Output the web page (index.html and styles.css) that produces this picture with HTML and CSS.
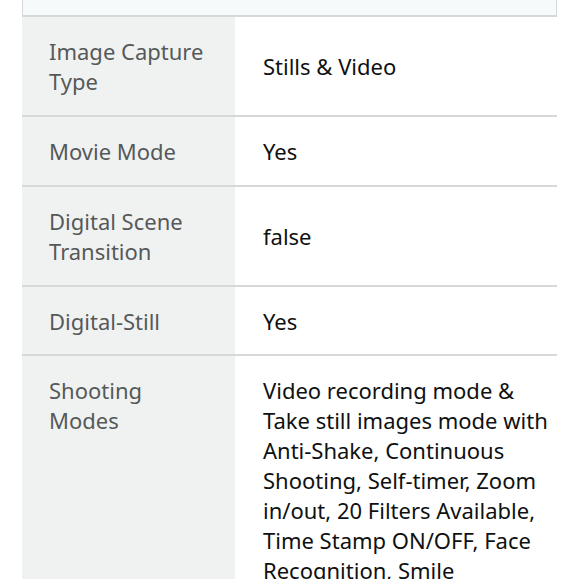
FILE: index.html
```html
<!DOCTYPE html>
<html>
<head>
<meta charset="utf-8">
<link rel="stylesheet" href="styles.css">
</head>
<body>
<div class="wrap">
  <div class="topbox"></div>
  <table class="specs">
    <tr><th>Image Capture Type</th><td>Stills &amp; Video</td></tr>
    <tr><th>Movie Mode</th><td>Yes</td></tr>
    <tr><th>Digital Scene Transition</th><td>false</td></tr>
    <tr class="short"><th>Digital-Still</th><td>Yes</td></tr>
    <tr class="top"><th>Shooting Modes</th><td>Video recording mode &amp; Take still images mode with Anti-Shake, Continuous Shooting, Self-timer, Zoom in/out, 20 Filters Available, Time Stamp ON/OFF, Face Recognition, Smile Detection</td></tr>
  </table>
</div>
</body>
</html>
```
FILE: styles.css
```css
html, body { margin: 0; padding: 0; background: #fff; }
body { font-family: "Noto Sans", "Open Sans", Arial, sans-serif; overflow: hidden; height: 579px; }
.wrap { padding: 0 23px 0 22px; }
.topbox {
  height: 15px;
  background: #f7fafa;
  border: 1px solid #d5d9d9;
  border-top: none;
  border-bottom: 2px solid #d5d9d9;
}
.specs {
  width: 100%;
  border-collapse: collapse;
  font-size: 22px;
  line-height: 30px;
}
.specs th, .specs td {
  text-align: left;
  vertical-align: middle;
  padding: 19px 28px 19px 27px;
  border-bottom: 2px solid #d5d9d9;
}
.specs .short th, .specs .short td { padding-bottom: 18px; }
.specs th {
  width: 213px;
  box-sizing: border-box;
  background: #f0f2f2;
  color: #565959;
  font-weight: normal;
}
.specs td { color: #0f1111; padding-left: 28px; padding-right: 8px; }
.specs .top th, .specs .top td { vertical-align: top; }
```
